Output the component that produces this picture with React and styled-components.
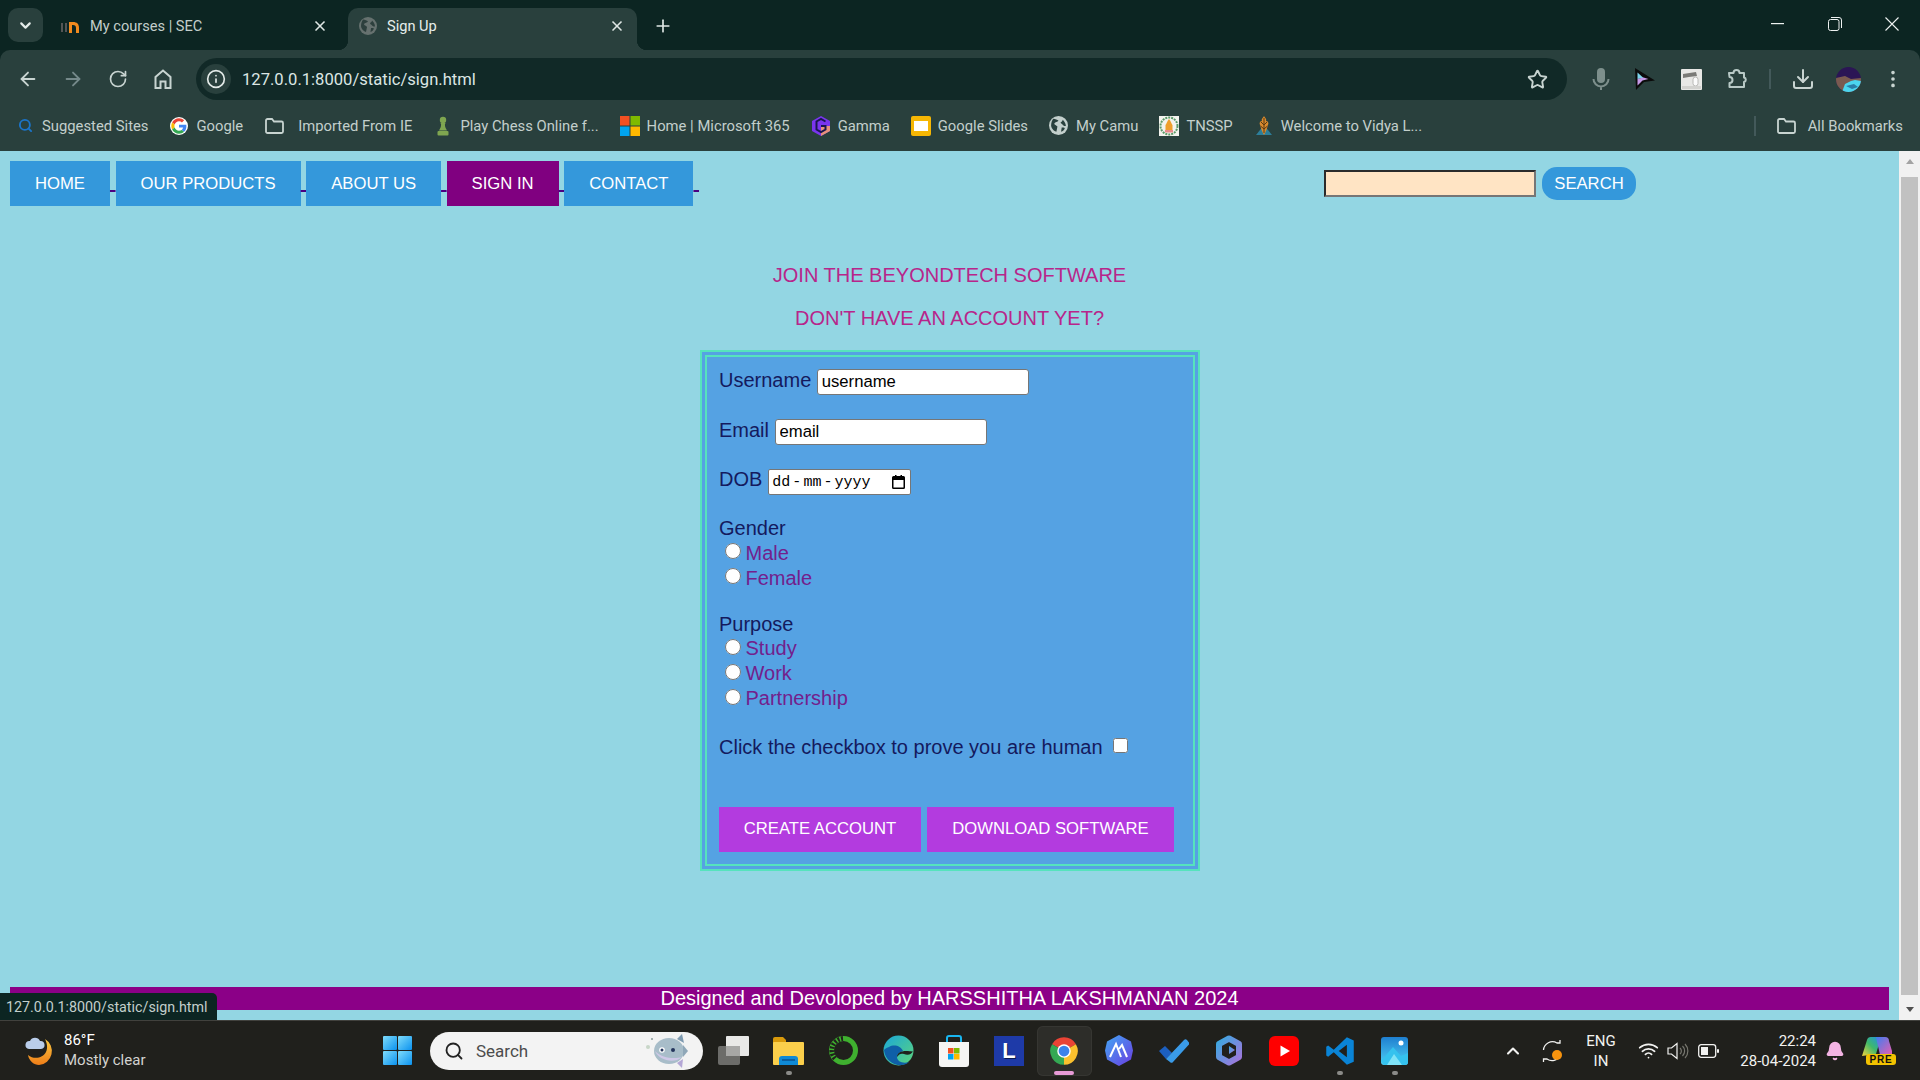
import React from 'react';
import styled, { createGlobalStyle } from 'styled-components';
import { ArrowLeft, ArrowRight, RotateCw, Info, Star, Download, EllipsisVertical, X, Plus, ChevronDown, Search, ChevronUp, Wifi, Bell } from 'lucide-react';

const Global = createGlobalStyle`
  html, body { margin: 0; padding: 0; height: 100%; overflow: hidden; }
  body { font-family: "Liberation Sans", Arial, sans-serif; }
  * { box-sizing: border-box; }
`;
const UI = `Roboto, "Noto Sans", sans-serif`;

const Shell = styled.div`position: relative; display: flex; flex-direction: column; width: 1920px; height: 1080px; background: #0c2522; overflow: hidden;`;

/* tab strip */
const TabStrip = styled.div`display: flex; align-items: flex-end; height: 50px; padding-left: 8px;`;
const TabMenu = styled.div`width: 35px; height: 34px; margin-bottom: 8px; border-radius: 10px; background: #29403d; color: #e4ecea; display: flex; align-items: center; justify-content: center;`;
const Tab = styled.div`
  position: relative; display: flex; align-items: center; height: 42px; width: ${p => p.$w}px; padding-left: ${p => p.$pl}px;
  font: 14.6px ${UI}; color: ${p => p.$active ? '#e6eeec' : '#c3cecb'}; border-radius: 10px 10px 0 0; padding-bottom: 6px;
  background: ${p => p.$active ? '#29403d' : 'transparent'};
  ${p => p.$active && `
    &::before, &::after { content: ""; position: absolute; bottom: 0; width: 10px; height: 10px; }
    &::before { left: -10px; background: radial-gradient(circle at 0 0, transparent 10px, #29403d 10.5px); }
    &::after { right: -10px; background: radial-gradient(circle at 100% 0, transparent 10px, #29403d 10.5px); }
  `}
`;
const TabTitle = styled.span`flex: 1; margin-left: ${p => p.$ml}px;`;
const TabClose = styled.span`display: flex; width: 16px; margin-right: ${p => p.$mr}px; color: #dfe7e5;`;
const NewTab = styled.div`width: 52px; height: 42px; display: flex; align-items: center; justify-content: center; color: #dfe7e5; padding-bottom: 6px;`;
const WinControls = styled.div`display: flex; margin-left: auto; height: 50px; align-self: flex-start;`;
const WinBtn = styled.div`width: 57px; height: 48px; display: flex; align-items: center; justify-content: center; color: #eef2f1;`;

/* toolbar */
const Toolbar = styled.div`display: flex; align-items: flex-end; height: 50px; padding-left: 5px; background: #29403d; border-radius: 10px 10px 0 0;`;
const ToolBtn = styled.div`width: ${p => p.$w || 45}px; height: 42px; display: flex; align-items: center; justify-content: center; color: ${p => p.$dim ? '#75898a' : '#c8d4d1'};`;
const Omnibox = styled.div`display: flex; align-items: center; width: 1371px; height: 42px; margin-left: 11px; border-radius: 21px; background: #112927; padding: 0 19px 0 5px;`;
const InfoChip = styled.div`width: 30px; height: 30px; border-radius: 50%; background: #29403d; display: flex; align-items: center; justify-content: center; color: #e3eae8;`;
const UrlText = styled.span`flex: 1; margin-left: 11px; font: 16.6px ${UI}; color: #dce6e4;`;
const ToolRight = styled.div`display: flex; margin-left: 11px;`;
const VSep = styled.div`width: 2px; height: ${p => p.$h || 20}px; background: #43595a;`;

/* bookmarks */
const Bookmarks = styled.div`display: flex; align-items: center; height: 51px; padding: 0 17px 0 16px; gap: 22px; background: #29403d; font: 14.8px ${UI}; color: #c3cfcc;`;
const Bookmark = styled.div`display: flex; align-items: center; gap: ${p => p.$gap || 8}px; white-space: nowrap;`;
const BmIcon = styled.span`display: flex; width: 18px; height: 20px; align-items: center; justify-content: center; flex: none; svg { flex: none; }`;
const AllBookmarks = styled(Bookmark)`margin-left: auto;`;
const BmSep = styled(VSep)`margin-right: 10px;`;

/* page */
const PageRow = styled.div`display: flex; flex: 1; min-height: 0; background: #93d6e3;`;
const Content = styled.div`flex: 1; display: flex; flex-direction: column; min-width: 0;`;
const Header = styled.header`display: flex; align-items: flex-start; padding: 9px 263px 0 10px; height: 56px;`;
const Nav = styled.nav`font-size: 20px; white-space: pre; line-height: 45px;`;
const NavLink = styled.a`color: #4b0082; text-decoration: underline; text-decoration-thickness: 1.5px;`;
const NavButton = styled.button`
  display: inline-block; height: 45px; padding: 1px 25px 0; border: 0; font: 16.67px "Liberation Sans", Arial, sans-serif; color: #fff;
  background: ${p => p.$active ? '#800080' : '#3498db'}; vertical-align: baseline;
`;
const SearchBox = styled.form`display: flex; align-items: center; gap: 6px; margin-left: auto; margin-top: 7px;`;
const SearchInput = styled.input`width: 212px; height: 27px; background: #ffe4c4; border: 2px solid; border-color: #2b2b2b #767676 #767676 #2b2b2b; outline: 0;`;
const SearchButton = styled.button`width: 94px; height: 33px; border: 0; border-radius: 15px; background: #3498db; color: #fff; font: 16.67px "Liberation Sans", Arial, sans-serif;`;

const Main = styled.main`display: flex; flex-direction: column; align-items: center;`;
const Heading = styled.div`font-size: 20px; line-height: 23px; color: #b8258a; margin-top: ${p => p.$mt}px;`;

const SignForm = styled.form`
  width: 500px; height: 521px; margin-top: 20px; padding: 12px 12px 12px 12.5px; border: 7px double #56e3bd; background: #55a2e3;
  display: flex; flex-direction: column; color: #141a5e; font-size: 20px;
`;
const Field = styled.div`display: flex; align-items: baseline; gap: 6px; height: 26px; margin-bottom: ${p => p.$mb}px;`;
const TextField = styled.input`
  width: 212px; height: 26px; padding: 1px 3.5px; border: 1px solid #767676; border-radius: 3px; background: #fff; color: #000;
  font: 16.67px "Liberation Sans", Arial, sans-serif; outline: 0;
`;
const DateBox = styled.div`
  display: flex; align-items: center; width: 143px; height: 26px; padding: 0 5px 0 3px; border: 1px solid #767676; border-radius: 2px;
  background: #fff; color: #000; font: 15px "Liberation Mono", monospace;
`;
const DateSep = styled.span`margin: 0 2px;`;
const CalIcon = styled.svg`margin-left: auto;`;
const Group = styled.div`display: flex; flex-direction: column; margin-bottom: ${p => p.$mb}px;`;
const GroupTitle = styled.div`line-height: 25px;`;
const RadioLine = styled.label`display: flex; align-items: center; height: 24.8px; color: #73208c;`;
const Radio = styled.input`width: 16px; height: 16px; margin: 0 5px 4px 5.5px; flex: none;`;
const HumanRow = styled.label`display: flex; align-items: center; height: 25px;`;
const Check = styled.input`width: 15px; height: 15px; margin: 0 0 3px 10.5px;`;
const FormActions = styled.div`display: flex; gap: 6px; margin: 47.5px 0 0 -.5px;`;
const FormButton = styled.button`height: 45px; width: ${p => p.$w}px; padding: 0 0 1.5px 1px; border: 0; background: #b33bdf; color: #fff; font: 16.67px "Liberation Sans", Arial, sans-serif;`;
const Footer = styled.footer`margin: auto 10px 10px; height: 23px; background: #8b0087; color: #fff; font-size: 20px; line-height: 23px; text-align: center;`;

const Scrollbar = styled.div`width: 21px; display: flex; flex-direction: column; align-items: center; justify-content: space-between; background: #f1f1f1; flex: none;`;
const ScrollThumb = styled.div`width: 17px; height: 818px; background: #c1c1c1;`;
const ScrollArrow = styled.div`
  width: 0; height: 0; margin: 8px 0; border-left: 4.5px solid transparent; border-right: 4.5px solid transparent;
  ${p => p.$up ? 'border-bottom: 5px solid #a3a3a3;' : 'border-top: 5px solid #505050;'}
`;
const StatusBubble = styled.div`position: absolute; left: 0; bottom: 60px; width: 217px; height: 27px; padding: 1px 6px 0; border-radius: 0 5px 0 0; background: #0c2522; color: #c3cfcc; font: 14.3px/27px ${UI};`;

/* taskbar */
const Taskbar = styled.div`display: flex; align-items: center; height: 60px; background: #20201c; border-top: 1px solid #41413d; color: #fff; font: 15px ${UI};`;
const Weather = styled.div`display: flex; align-items: center; gap: 9px; width: 383px; padding-left: 25px;`;
const WeatherText = styled.div`display: flex; flex-direction: column; gap: 1px; line-height: 19px;`;
const WeatherSub = styled.span`color: #d3d3d0;`;
const StartBtn = styled.div`display: flex; width: 29px; margin-right: 18px;`;
const SearchPill = styled.div`display: flex; align-items: center; width: 273px; height: 38px; margin-right: 3px; padding: 0 14px 0 14px; border-radius: 19px; background: #f3f3f3; color: #4c4c4c; font-size: 17px;`;
const PillLabel = styled.span`flex: 1; margin-left: 12px;`;
const AppSlot = styled.div`
  position: relative; display: flex; align-items: center; justify-content: center; width: 55.1px; height: 50px; border-radius: 6px;
  ${p => p.$on && 'background: #2d2d29; box-shadow: inset 0 0 0 1px #363632;'}
`;
const AppDot = styled.span`position: absolute; bottom: 1px; left: 50%; transform: translateX(-50%); height: 4px; border-radius: 2px; width: ${p => p.$on ? 20 : 6}px; background: ${p => p.$on ? '#e79ad6' : '#8b8b88'};`;
const Tray = styled.div`display: flex; align-items: center; margin-left: auto; margin-right: 20px; height: 100%;`;
const TraySlot = styled.div`width: ${p => p.$w}px; display: flex; align-items: center; justify-content: center; flex-direction: column; line-height: 20px; color: #f2f2f0;`;
const Clock = styled(TraySlot)`align-items: flex-end;`;
const PreBadge = styled.span`margin-top: -12px; margin-left: 8px; padding: 0 4px; border-radius: 3px; background: #f2c200; color: #111; font: 700 10px/11px "Liberation Sans", sans-serif; letter-spacing: .8px;`;
const LBadgeBox = styled.div`width: 30px; height: 30px; background: #1e3aa8; display: flex; align-items: center; justify-content: center; color: #fff; font: 700 22px "Liberation Sans", sans-serif; text-shadow: 1px 1px 0 #0a1a50;`;

const Google = ({ s = 18 }) => (
  <svg width={s} height={s} viewBox="-4 -4 56 56"><circle cx="24" cy="24" r="28" fill="#fff" />
    <path fill="#EA4335" d="M24 9.5c3.54 0 6.71 1.22 9.21 3.6l6.85-6.85C35.9 2.38 30.47 0 24 0 14.62 0 6.51 5.38 2.56 13.22l7.98 6.19C12.43 13.72 17.74 9.5 24 9.5z" />
    <path fill="#4285F4" d="M46.98 24.55c0-1.57-.15-3.09-.38-4.55H24v9.02h12.94c-.58 2.96-2.26 5.48-4.78 7.18l7.73 6c4.51-4.18 7.09-10.36 7.09-17.65z" />
    <path fill="#FBBC05" d="M10.53 28.59c-.48-1.45-.76-2.99-.76-4.59s.27-3.14.76-4.59l-7.98-6.19C.92 16.46 0 20.12 0 24c0 3.88.92 7.54 2.56 10.78l7.97-6.19z" />
    <path fill="#34A853" d="M24 48c6.48 0 11.93-2.13 15.89-5.81l-7.73-6c-2.15 1.45-4.92 2.3-8.16 2.3-6.26 0-11.57-4.22-13.47-9.91l-7.98 6.19C6.51 42.62 14.62 48 24 48z" />
  </svg>
);
const Folder = () => (
  <svg width="21" height="18" viewBox="0 0 20 18" fill="none" stroke="#c8d4d1" strokeWidth="1.8"><path d="M1.5 3.5a1.5 1.5 0 0 1 1.5-1.5h4.5l2 2.5h7.5a1.5 1.5 0 0 1 1.5 1.5v8.5a1.5 1.5 0 0 1-1.5 1.5H3a1.5 1.5 0 0 1-1.5-1.5z" /></svg>
);
const Home2 = () => (
  <svg width="20" height="22" viewBox="0 0 20 22" fill="none" stroke="#c8d4d1" strokeWidth="2"><path d="M2.5 20V9L10 2.5 17.5 9v11h-5v-6.500h-5V20z" /></svg>
);
const Chess = () => (
  <svg width="14" height="20" viewBox="0 0 14 20" fill="#7fa650"><circle cx="7" cy="4" r="3.2" /><path d="M4.5 7h5l-.6 1.4c0 2.4 1 4 2.1 6H3c1.100-2 2.100-3.600 2.100-6z" /><rect x="1.500" y="15" width="11" height="4.500" rx="1" /></svg>
);
const MsLogo = ({ s = 20 }) => (
  <svg width={s} height={s} viewBox="0 0 20 20"><rect width="9.500" height="9.500" fill="#f25022" /><rect x="10.500" width="9.500" height="9.500" fill="#7fba00" /><rect y="10.500" width="9.500" height="9.500" fill="#00a4ef" /><rect x="10.500" y="10.500" width="9.500" height="9.500" fill="#ffb900" /></svg>
);
const Gamma = () => (
  <svg width="18" height="20" viewBox="0 0 18 20"><path d="M9 0l9 5v10l-9 5-9-5V5z" fill="#7a35ee" /><path d="M9 10h9v5l-9 5z" fill="#e9917b" /><path d="M13.500 5.500 9 3 4.500 5.500v8L9 16l4.500-2.500V10H9" fill="none" stroke="#1a1650" strokeWidth="2" /></svg>
);
const Slides = () => (
  <svg width="20" height="20" viewBox="0 0 20 20"><rect width="20" height="20" rx="2" fill="#f6b704" /><rect x="3" y="5" width="14" height="10" fill="#fff" /></svg>
);
const GlobeDisc = ({ s = 18, bg, fg }) => (
  <svg width={s} height={s} viewBox="0 0 18 18"><circle cx="9" cy="9" r="9" fill={bg} /><path d="M4 2.500c2 .5 4 .5 5 2-1 1.500-3 1-4 2.500 0 1.500 2 1.500 3 3l-1 5C4 14 2 11 2 9c0-3 1-5 2-6.500zM13 3.500c1 1 3 3 3 6-1 0-2 0-3-1 0-1-2-1-2-2.500 1-.5 2-1.500 2-2.500zM12 11c1 0 2.500 0 3 .5-.5 1.500-2 3-3.500 3.500 0-1 .5-3 .5-4z" fill={fg} /></svg>
);
const Tnssp = () => (
  <svg width="20" height="20" viewBox="0 0 20 20"><rect width="20" height="20" fill="#f3f3ee" /><circle cx="10" cy="10" r="8.500" fill="none" stroke="#5b9a68" strokeWidth="2" strokeDasharray="2 1" /><path d="M6.500 15V9c1-1 1.500-4 3.500-6 2 2 2.500 5 3.500 6v6z" fill="#ef9f2c" /><rect x="6" y="14" width="8" height="2.500" fill="#e98a8a" /></svg>
);
const Vidya = () => (
  <svg width="20" height="22" viewBox="0 0 20 22"><path d="M2 20 L10 10 L18 20z" fill="#2c7f9b" /><path d="M10 1c1 2 3 3 2 5 2 0 3 2 2 4-1 3-2 7-4 10-2-3-3-7-4-10-1-2 0-4 2-4-1-2 1-3 2-5z" fill="#d98a2e" /><path d="M10 3v15M7 7l3 3 3-3M6.500 11l3.500 3 3.500-3" stroke="#5b3a12" fill="none" /></svg>
);
const MicIcon = () => (
  <svg width="18" height="24" viewBox="0 0 18 24" fill="none"><rect x="5" y="1" width="8" height="15" rx="4" fill="#7d8f8c" /><path d="M1.500 12a7.500 7.500 0 0 0 15 0M9 19.500V23" stroke="#7d8f8c" strokeWidth="2" /></svg>
);
const Cursor = () => (
  <svg width="24" height="24" viewBox="0 0 24 24"><path d="M3 1 23 13.500 12 15 4 23z" fill="#0b0b0b" /><path d="M5.500 5.500v6.500l6-1z" fill="#7fd5ec" /><path d="M5.500 12v6.500l5-5 6-1.500-5-1.500z" fill="#c79ae8" /></svg>
);
const NotesExt = () => (
  <svg width="21" height="21" viewBox="0 0 21 21"><rect width="21" height="21" rx="1" fill="#e8e8e6" /><path d="M2 5l13-2 1 4-8 1-6 1z" fill="#7b7b78" /><rect x="12" y="8" width="5" height="9" rx="2.500" fill="#fbfbfb" stroke="#b9b9b6" /><rect x="1" y="17" width="19" height="3" fill="#d2d2cf" /></svg>
);
const PuzzleExt = () => (
  <svg width="22" height="22" viewBox="0 0 22 22" fill="none" stroke="#b8c9c6" strokeWidth="2" strokeLinejoin="round"><path d="M3 5h4.500a3 3 0 0 1 6 0H18v4.500a2.300 2.300 0 0 1 0 4.500V19H3.500v-4a3 3 0 0 0 0-6z" /></svg>
);
const Avatar = () => (
  <svg width="25" height="25" viewBox="0 0 25 25"><defs><clipPath id="av"><circle cx="12.500" cy="12.500" r="12.500" /></clipPath></defs><g clipPath="url(#av)"><rect width="25" height="25" fill="#2b1555" /><path d="M0 11l9-2 6 3 10-1v14H0z" fill="#7a5a50" /><path d="M6 25l3-8 6-3 4-1 6 1v11z" fill="#4bd5ee" /><path d="M10 19l8-2 4 3-6 2z" fill="#2a7ea8" /></g></svg>
);
const Restore = () => (
  <svg width="14" height="14" viewBox="0 0 14 14" fill="none" stroke="#eef2f1" strokeWidth="1"><rect x=".5" y="2.500" width="10.500" height="11" rx="2" /><path d="M3 .5h8a2.500 2.500 0 0 1 2.500 2.500v8" /></svg>
);
const CloseThin = () => (
  <svg width="14" height="14" viewBox="0 0 14 14" stroke="#eef2f1" strokeWidth="1.100"><path d="M.5.5l13 13M13.500.5l-13 13" /></svg>
);
const Minimize = () => (
  <svg width="13" height="2" viewBox="0 0 13 2"><rect width="13" height="1.200" fill="#eef2f1" /></svg>
);
const MoonCloud = () => (
  <svg width="30" height="32" viewBox="0 0 30 32"><defs><linearGradient id="mg" x1="0" y1="0" x2="0" y2="1"><stop offset="0" stopColor="#f9c942" /><stop offset="1" stopColor="#ee7d18" /></linearGradient></defs><path d="M20 4a14 14 0 0 1-6 26C9 30 4 26 3 20c6 5 15 3 18-3 2-4 1-9-1-13z" fill="url(#mg)" /><path d="M4 14a4 4 0 0 1 1-8 5.500 5.500 0 0 1 10 0 4 4 0 0 1 1 8z" fill="#b9cdea" /></svg>
);
const WinLogo = () => (
  <svg width="29" height="29" viewBox="0 0 29 29"><defs><linearGradient id="wl" x1="0" y1="0" x2="1" y2="1"><stop offset="0" stopColor="#7fdcfb" /><stop offset="1" stopColor="#0b92ef" /></linearGradient></defs><rect width="14" height="14" rx="1" fill="url(#wl)" /><rect x="15" width="14" height="14" rx="1" fill="url(#wl)" /><rect y="15" width="14" height="14" rx="1" fill="url(#wl)" /><rect x="15" y="15" width="14" height="14" rx="1" fill="url(#wl)" /></svg>
);
const Fish = () => (
  <svg width="44" height="36" viewBox="0 0 44 36"><circle cx="3" cy="14" r="2" fill="#c8d6c8" /><circle cx="7" cy="6" r="1" fill="#8a9a9a" /><path d="M32 6l5-5 2 9z" fill="#7d9ab0" /><path d="M32 30l5 5 1-9z" fill="#b4a7d6" /><ellipse cx="24" cy="18" rx="15" ry="13" fill="#a8bdc9" /><path d="M10 18c3 8 18 14 27 6-6 2-20 2-27-6z" fill="#cfc8e8" /><circle cx="17" cy="17" r="2.800" fill="#fff" /><circle cx="17" cy="17" r="1.500" fill="#23345c" /><circle cx="28" cy="17" r="2" fill="#23345c" /><path d="M38 12l5 6-5 6z" fill="#8fa7b8" /></svg>
);
const TaskView = () => (
  <svg width="32" height="29" viewBox="0 0 32 29"><rect y="10" width="22" height="19" rx="2" fill="#6c6c69" /><rect x="8" width="23" height="20" rx="1" fill="#e9e9e7" /><rect x="8" y="10" width="14" height="10" fill="#a7a7a5" /></svg>
);
const Explorer = () => (
  <svg width="31" height="28" viewBox="0 0 31 28"><path d="M0 2a2 2 0 0 1 2-2h8l3 3v5H0z" fill="#d99a0b" /><rect y="5" width="31" height="23" rx="1" fill="#fbcf4b" /><path d="M6 28v-6a3 3 0 0 1 3-3h13a3 3 0 0 1 3 3v6z" fill="#0f8ad6" /><rect x="9" y="22" width="13" height="2" fill="#0b5fa0" /></svg>
);
const Ring = () => (
  <svg width="31" height="31" viewBox="0 0 31 31" fill="none"><circle cx="15.500" cy="15.500" r="12" stroke="#3fb02f" strokeWidth="5" /><path d="M15 3.500a12 12 0 0 0-7 21" stroke="#20201c" strokeWidth="5" strokeDasharray="2 1.500" /></svg>
);
const Edge = () => (
  <svg width="31" height="31" viewBox="0 0 31 31"><defs><linearGradient id="eg" x1="0" y1="0" x2="1" y2="1"><stop offset="0" stopColor="#1aa7d9" /><stop offset="1" stopColor="#5ed67a" /></linearGradient></defs><circle cx="15.500" cy="15.500" r="15" fill="url(#eg)" /><path d="M1 15C2 26 12 31 19 30c4-.5 6-2 7-3-6 2-12-.5-12-5 0-3 3-5 6-6-2-5-9-7-14-4C3 13 2 14 1 15z" fill="#0f5fa8" /><path d="M14 22c0-4 4-6 9-6 4 0 7 1 7 0-1 3-5 5-9 3-3-1-5 0-7 3z" fill="#20201c" /></svg>
);
const StoreIcon = () => (
  <svg width="30" height="32" viewBox="0 0 30 32"><path d="M8 8V3a2 2 0 0 1 2-2h10a2 2 0 0 1 2 2v5" fill="none" stroke="#19b6f0" strokeWidth="2" /><path d="M0 7h30v22a3 3 0 0 1-3 3H3a3 3 0 0 1-3-3z" fill="#f5f5f3" /><g transform="translate(9 13)"><rect width="5.500" height="5.500" fill="#f25022" /><rect x="6" width="5.500" height="5.500" fill="#7fba00" /><rect y="6" width="5.500" height="5.500" fill="#00a4ef" /><rect x="6" y="6" width="5.500" height="5.500" fill="#ffb900" /></g></svg>
);
const ChromeLogo = () => (
  <svg width="30" height="30" viewBox="0 0 24 24"><path d="M12 12 21.530 6.500A11 11 0 0 0 2.470 6.500z" fill="#ea4335" /><path d="M12 12 2.470 6.500A11 11 0 0 0 12 23z" fill="#34a853" /><path d="M12 12 12 23A11 11 0 0 0 21.530 6.500z" fill="#fbc02d" /><circle cx="12" cy="12" r="5.400" fill="#fff" /><circle cx="12" cy="12" r="4.300" fill="#3b82ea" /></svg>
);
const Mountain = () => (
  <svg width="28" height="31" viewBox="0 0 28 31"><defs><linearGradient id="hx" x1="0" y1="0" x2="1" y2="1"><stop offset="0" stopColor="#42a8f5" /><stop offset="1" stopColor="#6a3ce0" /></linearGradient></defs><path d="M14 0l12 6.500 2 9-2 9L14 31 2 24.500l-2-9 2-9z" fill="url(#hx)" /><path d="M5 22 11 9l5 13M14 14l3-4 5 12" fill="none" stroke="#fff" strokeWidth="2" /></svg>
);
const CheckTask = () => (
  <svg width="30" height="24" viewBox="0 0 30 24"><path d="M0 12l6-5 7 7-6 6z" fill="#1c5fbf" /><path d="M7 20 25 1a2 2 0 0 1 3 0l1.500 2a2 2 0 0 1 0 3L14 23a2 2 0 0 1-3 0z" fill="#3a9be8" /></svg>
);
const CopilotTask = () => (
  <svg width="26" height="31" viewBox="0 0 26 31"><defs><linearGradient id="cp" x1="0" y1="0" x2="1" y2="1"><stop offset="0" stopColor="#3aa8e0" /><stop offset="1" stopColor="#a277dc" /></linearGradient></defs><path d="M13 3.500 23 9v13l-10 5.500L3 22V9z" fill="none" stroke="url(#cp)" strokeWidth="6" strokeLinejoin="round" /><path d="M13 11l6 4-6 4z" fill="url(#cp)" /></svg>
);
const YouTube = () => (
  <svg width="30" height="30" viewBox="0 0 30 30"><rect width="30" height="30" rx="6" fill="#f00" /><path d="M11.500 9.500 21 15l-9.500 5.500z" fill="#fff" /></svg>
);
const VSCode = () => (
  <svg width="30" height="30" viewBox="0 0 24 24"><path d="M17.500 1 23 3.500v17L17.500 23 7 13l-4.500 3.500L1 15.500v-7L2.500 7.500 7 11zM17.500 7 11 12l6.500 5z" fill="#0a84d6" fillRule="evenodd" /></svg>
);
const Photos = () => (
  <svg width="27" height="28" viewBox="0 0 27 28"><defs><linearGradient id="ph" x1="0" y1="0" x2="0" y2="1"><stop offset="0" stopColor="#1f7fd0" /><stop offset="1" stopColor="#4dd0f4" /></linearGradient></defs><rect width="27" height="28" rx="3" fill="url(#ph)" /><path d="M0 24 12 10l8 9 7-3v9a3 3 0 0 1-3 3H3z" fill="#35c2ee" /><path d="M6 28 13 17l8 11z" fill="#7fe3f7" /><circle cx="20" cy="6" r="2.500" fill="#fff" /></svg>
);
const Sync = () => (
  <svg width="24" height="24" viewBox="0 0 22 24" fill="none" stroke="#f2f2f0" strokeWidth="1.300"><path d="M1.500 11A9 9 0 0 1 15 4h3M18 1v3h-3M18 17a9 9 0 0 1-13 3H1.500M1.500 23v-3h3" /><circle cx="15" cy="16" r="5" fill="#f7930e" stroke="none" /></svg>
);
const Speaker = () => (
  <svg width="22" height="18" viewBox="0 0 22 18" fill="none" stroke="#f2f2f0" strokeWidth="1.200"><path d="M1 6h3.500L10 1.500v15L4.500 12H1z" /><path d="M13 6a4 4 0 0 1 0 6M15.500 4a7 7 0 0 1 0 10M18 2a10 10 0 0 1 0 14" stroke="#77776f" /></svg>
);
const Battery = () => (
  <svg width="21" height="14" viewBox="0 0 21 14" fill="none"><rect x=".7" y=".7" width="17" height="12.600" rx="2.500" stroke="#f2f2f0" strokeWidth="1.300" /><rect x="3" y="3" width="7" height="8" fill="#f2f2f0" /><rect x="19" y="5" width="2" height="4" rx="1" fill="#f2f2f0" /></svg>
);
const CopilotPre = () => (
  <svg width="30" height="30" viewBox="0 0 30 30"><defs><linearGradient id="c1" x1="0" y1="1" x2="1" y2="0"><stop offset="0" stopColor="#f7d43c" /><stop offset=".5" stopColor="#3fb96a" /><stop offset="1" stopColor="#1f8fe8" /></linearGradient><linearGradient id="c2" x1="0" y1="0" x2="1" y2="1"><stop offset="0" stopColor="#3f7df0" /><stop offset="1" stopColor="#e85fb0" /></linearGradient></defs><path d="M0 20 5 4a4 4 0 0 1 4-3h10l-5 17z" fill="url(#c1)" /><path d="M14 1h9a4 4 0 0 1 4 4l3 10v4H18z" fill="url(#c2)" /></svg>
);

const rightIcons = [
  [45, <MicIcon />],
  [42, <Cursor />],
  [52, <NotesExt />],
  [40, <PuzzleExt />],
  [26, <VSep $h={20} />],
  [40, <Download size={24} />],
  [50, <Avatar />],
  [40, <EllipsisVertical size={22} />],
];

const bookmarks = [
  [<Search size={15} color="#1b74c9" strokeWidth={3} />, 'Suggested Sites'],
  [<Google />, 'Google'],
  [<Folder />, 'Imported From IE', 15],
  [<Chess />, 'Play Chess Online f...'],
  [<MsLogo />, 'Home | Microsoft 365'],
  [<Gamma />, 'Gamma'],
  [<Slides />, 'Google Slides'],
  [<GlobeDisc s={19} bg="#c3cfcc" fg="#29403d" />, 'My Camu'],
  [<Tnssp />, 'TNSSP'],
  [<Vidya />, 'Welcome to Vidya L...'],
];

const apps = [
  [<TaskView />], [<Explorer />, 'dot'], [<Ring />], [<Edge />], [<StoreIcon />], [<LBadgeBox>L</LBadgeBox>],
  [<ChromeLogo />, 'on'], [<Mountain />], [<CheckTask />], [<CopilotTask />], [<YouTube />], [<VSCode />, 'dot'], [<Photos />, 'dot'],
];

export default function App() {
  const stop = e => e.preventDefault();
  return (
    <Shell>
      <Global />
      <TabStrip>
        <TabMenu><ChevronDown size={17} strokeWidth={3} /></TabMenu>
        <Tab $w={305} $pl={17}>
          <svg width="22" height="18" viewBox="0 0 22 18"><path d="M2 15V6M6 15V6" stroke="#555" strokeWidth="2" /><path d="M9 16V5h4c4 0 6 2 6 6v5h-3v-5c0-2-1-3-3-3h-1v8z" fill="#f28a1e" /></svg>
          <TabTitle $ml={8}>My courses | SEC</TabTitle>
          <TabClose $mr={20}><X size={16} strokeWidth={2.5} /></TabClose>
        </Tab>
        <Tab $active $w={289} $pl={11}>
          <GlobeDisc s={18} bg="#66716f" fg="#2d3f3d" />
          <TabTitle $ml={10}>Sign Up</TabTitle>
          <TabClose $mr={12}><X size={16} strokeWidth={2.5} /></TabClose>
        </Tab>
        <NewTab><Plus size={20} strokeWidth={2} /></NewTab>
        <WinControls>
          <WinBtn><Minimize /></WinBtn>
          <WinBtn><Restore /></WinBtn>
          <WinBtn><CloseThin /></WinBtn>
        </WinControls>
      </TabStrip>

      <Toolbar>
        <ToolBtn><ArrowLeft size={22} /></ToolBtn>
        <ToolBtn $dim><ArrowRight size={22} /></ToolBtn>
        <ToolBtn><RotateCw size={20} /></ToolBtn>
        <ToolBtn><Home2 /></ToolBtn>
        <Omnibox>
          <InfoChip><Info size={20} /></InfoChip>
          <UrlText>127.0.0.1:8000/static/sign.html</UrlText>
          <Star size={21} color="#c8d4d1" strokeWidth={2.2} />
        </Omnibox>
        <ToolRight>
          {rightIcons.map(([w, icon], i) => <ToolBtn key={i} $w={w}>{icon}</ToolBtn>)}
        </ToolRight>
      </Toolbar>

      <Bookmarks>
        {bookmarks.map(([icon, label, gap]) => (
          <Bookmark key={label} $gap={gap}><BmIcon>{icon}</BmIcon>{label}</Bookmark>
        ))}
        <AllBookmarks $gap={12}><BmSep $h={20} /><BmIcon><Folder /></BmIcon>All Bookmarks</AllBookmarks>
      </Bookmarks>

      <PageRow>
        <Content>
          <Header>
            <Nav>
              <NavLink href="#"><NavButton>HOME</NavButton> </NavLink>
              <NavLink href="#"><NavButton>OUR PRODUCTS</NavButton> </NavLink>
              <NavLink href="#"><NavButton>ABOUT US</NavButton> </NavLink>
              <NavLink href="#"><NavButton $active>SIGN IN</NavButton> </NavLink>
              <NavLink href="#"><NavButton>CONTACT</NavButton> </NavLink>
            </Nav>
            <SearchBox onSubmit={stop}>
              <SearchInput type="text" />
              <SearchButton>SEARCH</SearchButton>
            </SearchBox>
          </Header>
          <Main>
            <Heading $mt={57}>JOIN THE BEYONDTECH SOFTWARE</Heading>
            <Heading $mt={20}>DON'T HAVE AN ACCOUNT YET?</Heading>
            <SignForm onSubmit={stop}>
              <Field $mb={24}>Username <TextField type="text" defaultValue="username" /></Field>
              <Field $mb={22.5}>Email <TextField type="email" defaultValue="email" /></Field>
              <Field $mb={22.5}>DOB
                <DateBox>dd<DateSep>-</DateSep>mm<DateSep>-</DateSep>yyyy
                  <CalIcon width="13" height="14" viewBox="0 0 13 14"><path d="M0 2.500A1.500 1.500 0 0 1 1.500 1H3V0h1.500v1h4V0H10v1h1.500A1.500 1.500 0 0 1 13 2.500v10a1.500 1.500 0 0 1-1.500 1.500h-10A1.500 1.500 0 0 1 0 12.500zM1.500 5v7.500h10V5z" fill="#000" fillRule="evenodd" /></CalIcon>
                </DateBox>
              </Field>
              <Group $mb={21}>
                <GroupTitle>Gender</GroupTitle>
                <RadioLine><Radio type="radio" name="gender" />Male</RadioLine>
                <RadioLine><Radio type="radio" name="gender" />Female</RadioLine>
              </Group>
              <Group $mb={24}>
                <GroupTitle>Purpose</GroupTitle>
                <RadioLine><Radio type="radio" name="purpose" />Study</RadioLine>
                <RadioLine><Radio type="radio" name="purpose" />Work</RadioLine>
                <RadioLine><Radio type="radio" name="purpose" />Partnership</RadioLine>
              </Group>
              <HumanRow>Click the checkbox to prove you are human<Check type="checkbox" /></HumanRow>
              <FormActions>
                <FormButton $w={202}>CREATE ACCOUNT</FormButton>
                <FormButton $w={247}>DOWNLOAD SOFTWARE</FormButton>
              </FormActions>
            </SignForm>
          </Main>
          <Footer>Designed and Devoloped by HARSSHITHA LAKSHMANAN 2024</Footer>
        </Content>
        <Scrollbar>
          <ScrollArrow $up />
          <ScrollThumb />
          <ScrollArrow />
        </Scrollbar>
      </PageRow>

      <StatusBubble>127.0.0.1:8000/static/sign.html</StatusBubble>

      <Taskbar>
        <Weather>
          <MoonCloud />
          <WeatherText><span>86°F</span><WeatherSub>Mostly clear</WeatherSub></WeatherText>
        </Weather>
        <StartBtn><WinLogo /></StartBtn>
        <SearchPill>
          <Search size={20} color="#222" strokeWidth={2.2} />
          <PillLabel>Search</PillLabel>
          <Fish />
        </SearchPill>
        {apps.map(([icon, state], i) => (
          <AppSlot key={i} $on={state === 'on'}>{icon}{state && <AppDot $on={state === 'on'} />}</AppSlot>
        ))}
        <Tray>
          <TraySlot $w={46}><ChevronUp size={20} strokeWidth={2.5} /></TraySlot>
          <TraySlot $w={34}><Sync /></TraySlot>
          <TraySlot $w={62}><span>ENG</span><span>IN</span></TraySlot>
          <TraySlot $w={32}><Wifi size={21} /></TraySlot>
          <TraySlot $w={28}><Speaker /></TraySlot>
          <TraySlot $w={32}><Battery /></TraySlot>
          <Clock $w={92}><span>22:24</span><span>28-04-2024</span></Clock>
          <TraySlot $w={38}><Bell size={20} color="#f4b4e4" fill="#f4b4e4" /></TraySlot>
          <TraySlot $w={46}><CopilotPre /><PreBadge>PRE</PreBadge></TraySlot>
        </Tray>
      </Taskbar>
    </Shell>
  );
}
